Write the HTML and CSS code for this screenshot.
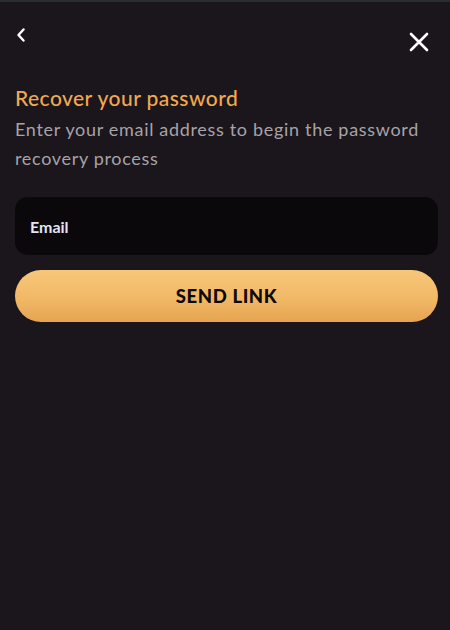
FILE: index.html
```html
<!DOCTYPE html>
<html lang="en">
<head>
<meta charset="utf-8">
<title>Recover your password</title>
<link rel="stylesheet" href="styles.css">
</head>
<body>
<div class="modal">
  <div class="topbar">
    <button class="icon-btn back" aria-label="Back">
      <svg width="10" height="14" viewBox="0 0 10 14"><path d="M7.5 1.5 L2.5 7 L7.5 12.5" fill="none" stroke="#fff" stroke-width="2.4" stroke-linecap="round" stroke-linejoin="round"/></svg>
    </button>
    <button class="icon-btn close" aria-label="Close">
      <svg width="20" height="20" viewBox="0 0 20 20"><path d="M2 2 L18 18 M18 2 L2 18" stroke="#fff" stroke-width="2.6" stroke-linecap="round"/></svg>
    </button>
  </div>
  <h1 class="title">Recover your password</h1>
  <p class="subtitle">Enter your email address to begin the password recovery process</p>
  <div class="field"><span class="field-label">Email</span></div>
  <button class="send">SEND LINK</button>
</div>
</body>
</html>
```
FILE: styles.css
```css
html, body {
  margin: 0;
  padding: 0;
  height: 100%;
  background: #1a161b;
}
body {
  font-family: Lato, "Noto Sans", sans-serif;
  border-top: 2px solid #2b2e31;
  box-sizing: border-box;
}
.modal {
  padding: 0 12px 0 15px;
}
.topbar {
  display: flex;
  justify-content: space-between;
  align-items: flex-start;
  padding-top: 26px;
  height: 58px;
  box-sizing: border-box;
}
.icon-btn {
  background: none;
  border: 0;
  padding: 0;
  margin: 0;
  display: block;
  line-height: 0;
}
.back { margin-left: 1px; }
.close { margin-top: 4px; margin-right: 9px; }
.title {
  margin: 25px 0 0 0;
  font-size: 21px;
  font-weight: 500;
  color: #f2a94f;
  line-height: 26px;
  letter-spacing: 0.45px;
}
.subtitle {
  margin: 4px 0 0 0;
  font-size: 18px;
  line-height: 29px;
  color: #a7a3a8;
  font-weight: 400;
  letter-spacing: 0.68px;
  padding-right: 0;
}
.field {
  margin-top: 24px;
  height: 58px;
  border-radius: 13px;
  background: #0b080b;
  display: flex;
  align-items: center;
  padding-left: 15px;
}
.field-label {
  color: #e3e3f2;
  font-weight: 700;
  font-size: 16px;
}
.send {
  margin-top: 15px;
  width: 100%;
  height: 52px;
  border: 0;
  border-radius: 26px;
  background: linear-gradient(180deg, #f7c77a 0%, #f1b866 55%, #e6a452 100%);
  color: #0e0a0a;
  font-family: Lato, "Noto Sans", sans-serif;
  font-weight: 900;
  font-size: 18.5px;
  letter-spacing: 0.6px;
  display: block;
}
```
